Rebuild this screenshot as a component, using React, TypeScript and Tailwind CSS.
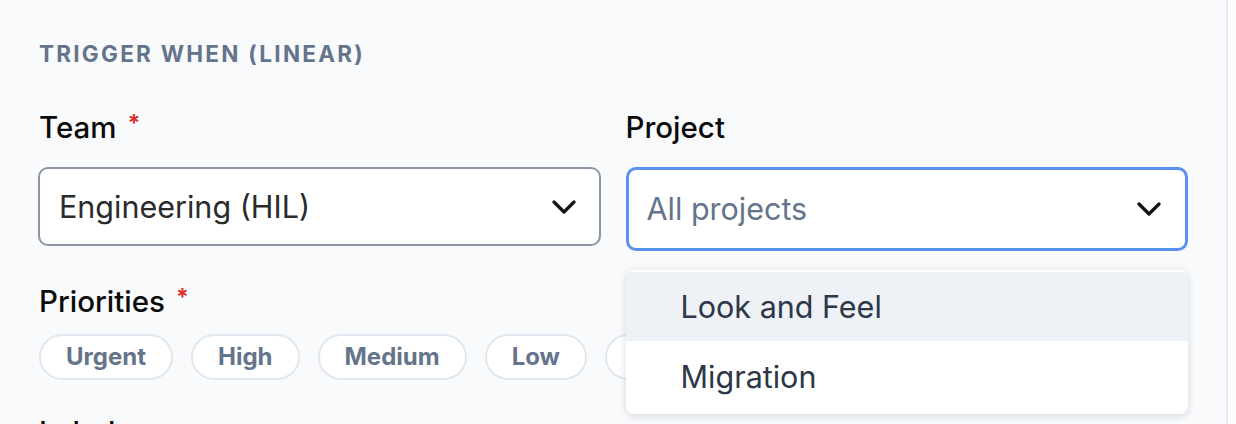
import React from "react";

const priorities = ["Urgent", "High", "Medium", "Low", "None"];

function Chevron() {
  return (
    <svg width="24" height="14" viewBox="0 0 24 14" fill="none" className="shrink-0">
      <path d="M2 2l10 10L22 2" stroke="#111" strokeWidth="3.2" strokeLinecap="round" strokeLinejoin="round" />
    </svg>
  );
}

function Label({ text, required }: { text: string; required?: boolean }) {
  return (
    <div className="flex items-start h-[34px] text-[29.5px] leading-[34px] font-medium text-[#0b0b0b]">
      {text}
      {required && <span className="ml-[11px] text-[23px] leading-[26px] font-bold text-[#d6322b]">*</span>}
    </div>
  );
}

export default function App() {
  return (
    <div
      className="w-[1236px] h-[424px] overflow-hidden flex bg-[#f8fafc]"
      style={{ fontFamily: "Inter, 'Noto Sans', sans-serif" }}
    >
      <div className="w-[1228px] shrink-0 border-r-2 border-[#e6e9ee] pl-[38px] pr-[38px] pt-[41px]">
        <div className="pl-[1px] text-[22.5px] leading-[26px] font-bold tracking-[0.1em] text-[#64748b]">
          TRIGGER WHEN (LINEAR)
        </div>

        <div className="mt-[43px] grid grid-cols-2 gap-x-[25px]">
          <div>
            <div className="pl-[1px]">
              <Label text="Team" required />
            </div>
            <div className="mt-[23px] h-[79px] rounded-[10px] border-2 border-[#8c95a6] bg-white flex items-center justify-between pl-[19px] pr-[23px]">
              <span className="text-[30.5px] text-[#2b2b2b]">Engineering (HIL)</span>
              <Chevron />
            </div>
          </div>
          <div className="relative">
            <Label text="Project" />
            <div className="mt-[23px] h-[84px] rounded-[10px] border-[3px] border-[#5b8ff0] bg-white flex items-center justify-between pl-[18px] pr-[24px]">
              <span className="text-[30.5px] text-[#64748b]">All projects</span>
              <Chevron />
            </div>
            <div className="absolute left-0 right-0 top-[160px] z-10 bg-white rounded-[8px] shadow-[0_2px_8px_rgba(15,23,42,0.14)] py-[2px] overflow-hidden">
              <div className="h-[69px] flex items-center pl-[55px] bg-[#eef1f5] text-[30.5px] text-[#2d3748]">
                Look and Feel
              </div>
              <div className="h-[71px] flex items-center pl-[55px] text-[30.5px] text-[#2d3748]">
                Migration
              </div>
            </div>
          </div>
        </div>

        <div className="mt-[33px] pl-[1px]">
          <Label text="Priorities" required />
          <div className="mt-[16px] flex gap-[18px]">
            {priorities.map((p) => (
              <div
                key={p}
                className="h-[46px] px-[25px] rounded-full border-2 border-[#e2e8f0] bg-white flex items-center text-[24px] font-bold text-[#64748b]"
              >
                {p}
              </div>
            ))}
          </div>
        </div>

        <div className="mt-[35px] pl-[1px]">
          <Label text="Labels" />
        </div>
      </div>
      <div className="flex-1 bg-[#fbfcfd]" />
    </div>
  );
}
